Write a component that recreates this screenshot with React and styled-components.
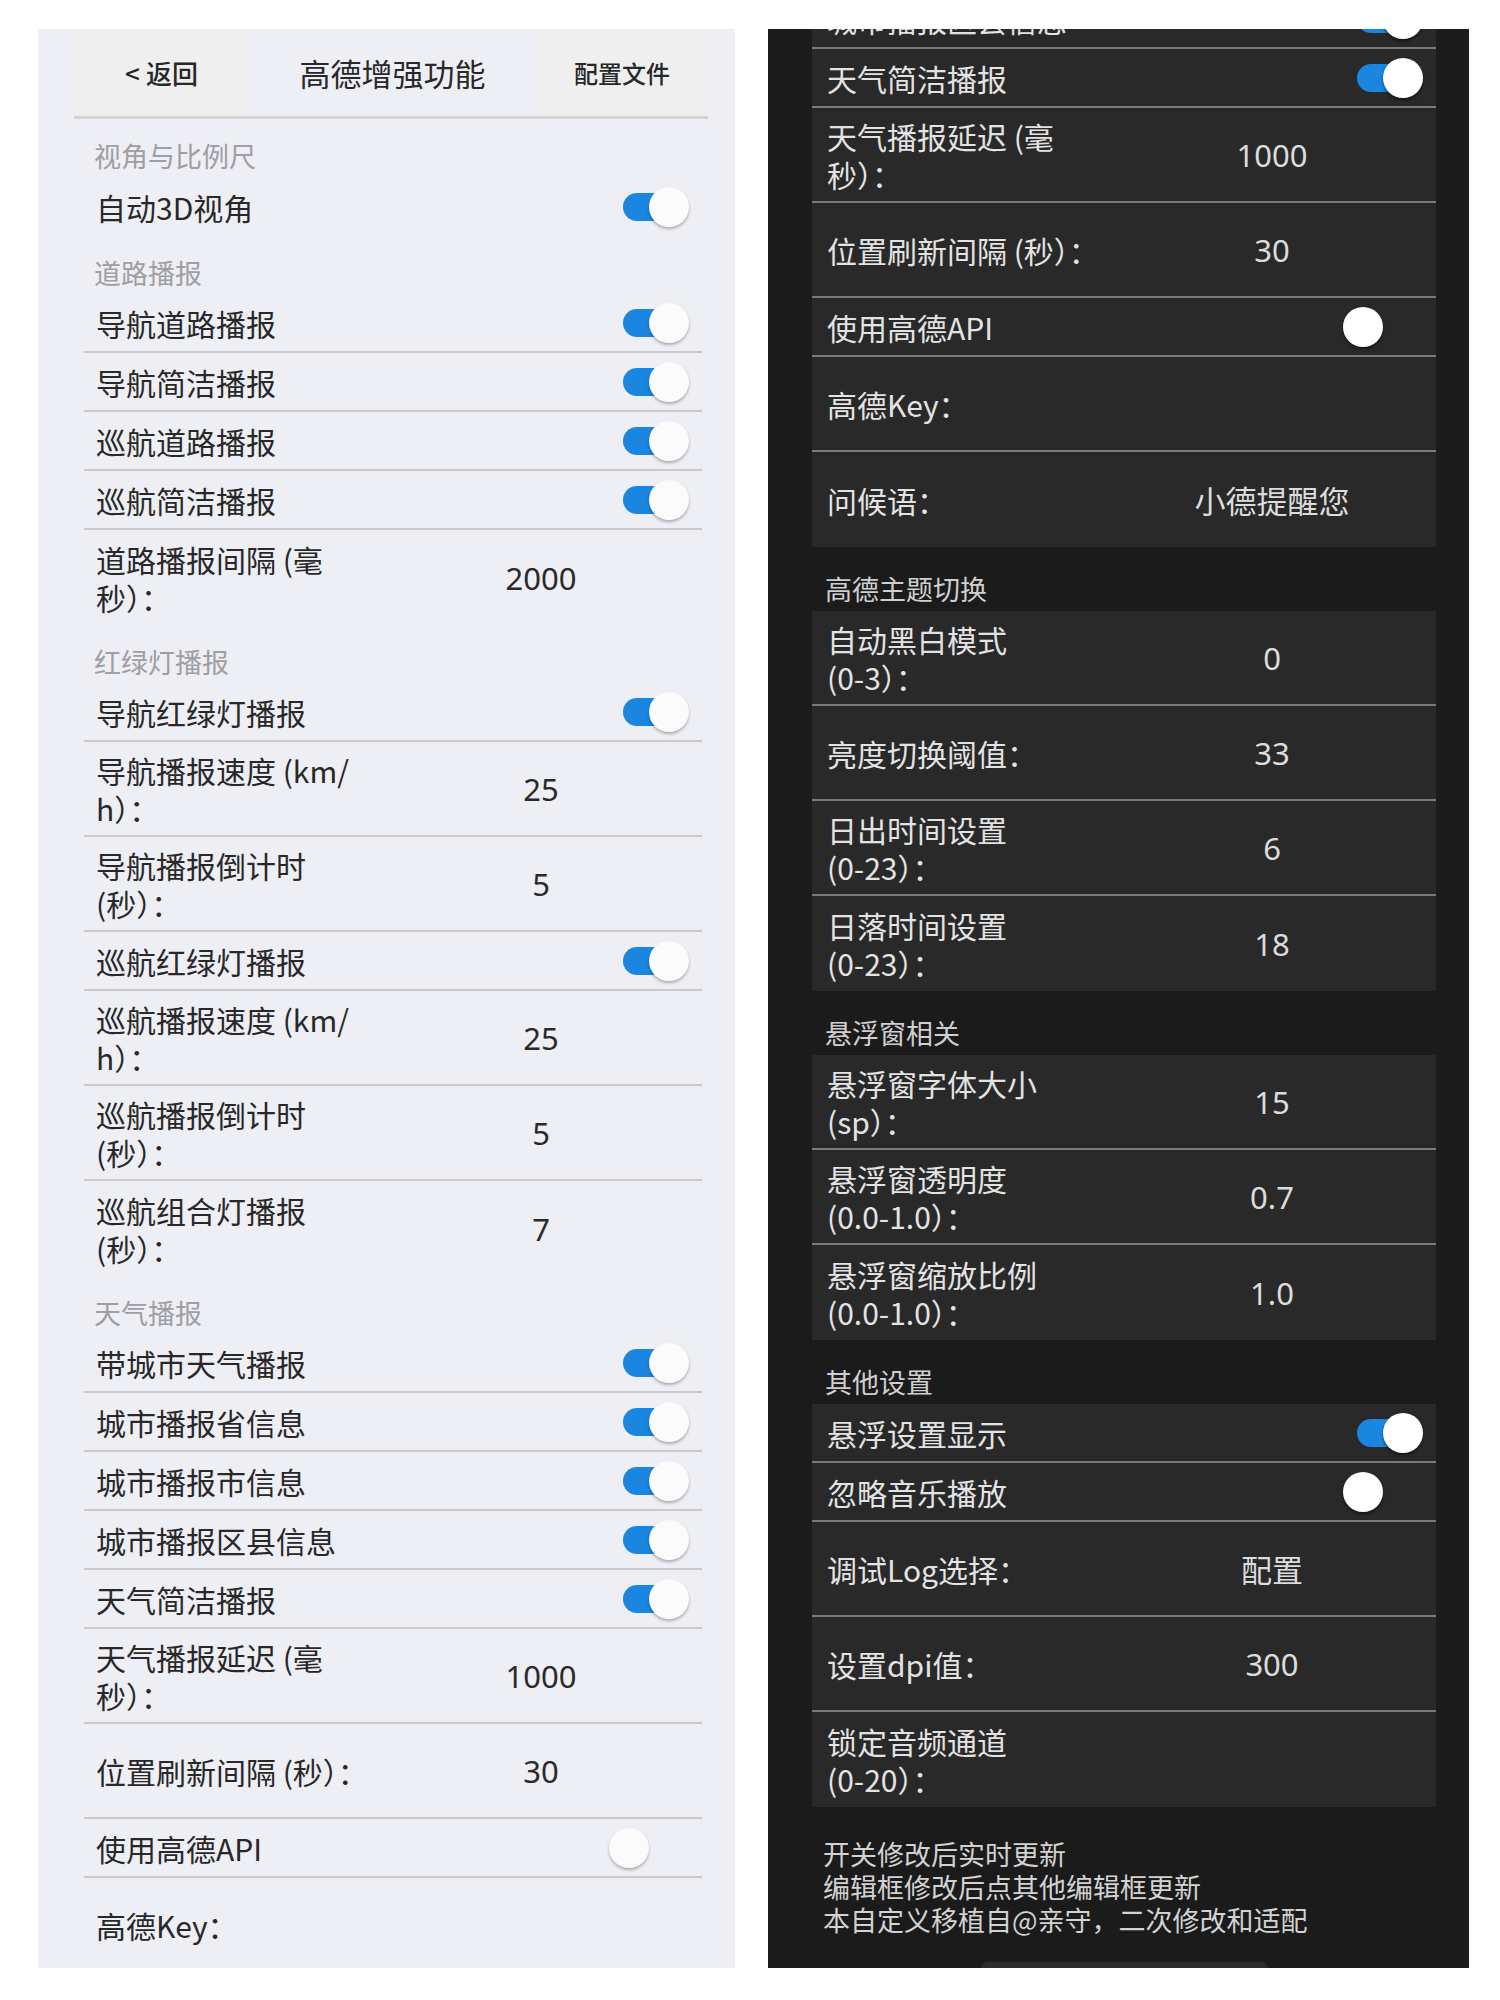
import React from 'react';
import styled, { createGlobalStyle, ThemeProvider } from 'styled-components';

const lightTheme = {
  panelBg: '#eeeef5',
  groupBg: 'transparent',
  text: '#282828',
  value: '#2a2a2a',
  sectionText: '#9e9ea3',
  divider: '#cacace',
  knob: '#fbfbfb',
  knobShadow: '0 2px 3px rgba(0, 0, 0, 0.28)',
  headerButtonBg: '#efeff0',
  headerLine: '#d4d4d8',
  note: '#555555',
  sectionHeight: 58,
  sectionPad: 8,
  sectionIndent: 10,
  rowIndent: 12,
  listLeft: 46,
};

const darkTheme = {
  panelBg: '#1b1b1b',
  groupBg: '#292929',
  text: '#e3e3e3',
  value: '#dcdcdc',
  sectionText: '#cfcfcf',
  divider: '#7a7a7a',
  knob: '#ffffff',
  knobShadow: '0 2px 3px rgba(0, 0, 0, 0.5)',
  headerButtonBg: '#252525',
  headerLine: '#333333',
  note: '#d2d2d2',
  sectionHeight: 64,
  sectionPad: 9,
  sectionIndent: 13,
  rowIndent: 15,
  listLeft: 44,
};

// settings list, shared by both colour schemes
const sections = [
  {
    title: '视角与比例尺',
    rows: [{ label: '自动3D视角', on: true }],
  },
  {
    title: '道路播报',
    rows: [
      { label: '导航道路播报', on: true },
      { label: '导航简洁播报', on: true },
      { label: '巡航道路播报', on: true },
      { label: '巡航简洁播报', on: true },
      { label: '道路播报间隔 (毫\n秒）：', value: '2000' },
    ],
  },
  {
    title: '红绿灯播报',
    rows: [
      { label: '导航红绿灯播报', on: true },
      { label: '导航播报速度 (km/\nh）：', value: '25' },
      { label: '导航播报倒计时\n(秒）：', value: '5' },
      { label: '巡航红绿灯播报', on: true },
      { label: '巡航播报速度 (km/\nh）：', value: '25' },
      { label: '巡航播报倒计时\n(秒）：', value: '5' },
      { label: '巡航组合灯播报\n(秒）：', value: '7' },
    ],
  },
  {
    title: '天气播报',
    rows: [
      { label: '带城市天气播报', on: true },
      { label: '城市播报省信息', on: true },
      { label: '城市播报市信息', on: true },
      { label: '城市播报区县信息', on: true },
      { label: '天气简洁播报', on: true },
      { label: '天气播报延迟 (毫\n秒）：', value: '1000' },
      { label: '位置刷新间隔 (秒）：', value: '30' },
      { label: '使用高德API', on: false },
      { label: '高德Key：', value: '' },
      { label: '问候语：', value: '小德提醒您' },
    ],
  },
  {
    title: '高德主题切换',
    rows: [
      { label: '自动黑白模式\n(0-3）：', value: '0' },
      { label: '亮度切换阈值：', value: '33' },
      { label: '日出时间设置\n(0-23）：', value: '6' },
      { label: '日落时间设置\n(0-23）：', value: '18' },
    ],
  },
  {
    title: '悬浮窗相关',
    rows: [
      { label: '悬浮窗字体大小\n(sp）：', value: '15' },
      { label: '悬浮窗透明度\n(0.0-1.0）：', value: '0.7' },
      { label: '悬浮窗缩放比例\n(0.0-1.0）：', value: '1.0' },
    ],
  },
  {
    title: '其他设置',
    rows: [
      { label: '悬浮设置显示', on: true },
      { label: '忽略音乐播放', on: false },
      { label: '调试Log选择：', value: '配置' },
      { label: '设置dpi值：', value: '300' },
      { label: '锁定音频通道\n(0-20）：', value: '' },
    ],
  },
];

const notes = '开关修改后实时更新\n编辑框修改后点其他编辑框更新\n本自定义移植自@亲守，二次修改和适配';

const GlobalStyle = createGlobalStyle`
  body {
    margin: 0;
    background: #ffffff;
    font-family: "Noto Sans CJK SC", "Noto Sans", sans-serif;
  }
`;

const Page = styled.div`
  display: flex;
  gap: 33px;
  padding: 29px 0 0 38px;
`;

const Panel = styled.div`
  position: relative;
  width: ${p => p.$width}px;
  height: 1939px;
  overflow: hidden;
  background: ${p => p.theme.panelBg};
`;

const Scroller = styled.div`
  margin-top: ${p => -p.$offset}px;
`;

const Header = styled.div`
  display: grid;
  grid-template-columns: 175px 1fr 172px;
  height: 90px;
  margin: 0 27px 0 36px;
  box-sizing: border-box;
  border-bottom: 3px solid ${p => p.theme.headerLine};
`;

const HeaderButton = styled.div`
  display: flex;
  align-items: center;
  justify-content: center;
  gap: 6px;
  background: ${p => p.theme.headerButtonBg};
  color: ${p => p.theme.text};
  font-size: ${p => p.$size}px;
  font-weight: 500;
`;

const HeaderTitle = styled.div`
  display: flex;
  align-items: center;
  justify-content: center;
  color: ${p => p.theme.text};
  font-size: 31px;
`;

const List = styled.div`
  margin: 0 33px 0 ${p => p.theme.listLeft}px;
`;

const SectionTitle = styled.div`
  display: flex;
  align-items: flex-end;
  height: ${p => p.theme.sectionHeight}px;
  box-sizing: border-box;
  padding: 0 0 ${p => p.theme.sectionPad}px ${p => p.theme.sectionIndent}px;
  font-size: 27px;
  line-height: 26px;
  color: ${p => p.theme.sectionText};
`;

const Group = styled.div`
  background: ${p => p.theme.groupBg};
`;

const Row = styled.div`
  display: flex;
  align-items: center;
  justify-content: ${p => (p.$tall ? 'flex-start' : 'space-between')};
  height: ${p => (p.$tall ? 95 : 59)}px;
  box-sizing: border-box;
  padding: 0 13px 0 ${p => p.theme.rowIndent}px;
  border-bottom: 2px solid ${p => p.theme.divider};

  &:last-child {
    border-bottom: none;
  }
`;

const Label = styled.div`
  flex-shrink: 0;
  width: ${p => (p.$tall ? '300px' : 'auto')};
  white-space: pre;
  font-size: 30px;
  line-height: 38px;
  color: ${p => p.theme.text};
`;

const Value = styled.div`
  width: 290px;
  text-align: center;
  font-family: "Noto Sans", "Noto Sans CJK SC", sans-serif;
  font-size: 31px;
  color: ${p => p.theme.value};
`;

const Switch = styled.span`
  position: relative;
  flex-shrink: 0;
  width: 80px;
  height: 40px;
`;

const Track = styled.span`
  position: absolute;
  left: 14px;
  top: 6px;
  width: 54px;
  height: 28px;
  border-radius: 14px;
  background: ${p => (p.$on ? '#1a86e0' : 'transparent')};
`;

const Knob = styled.span`
  position: absolute;
  top: 0;
  left: ${p => (p.$on ? 40 : 0)}px;
  width: 40px;
  height: 40px;
  border-radius: 50%;
  background: ${p => p.theme.knob};
  box-shadow: ${p => p.theme.knobShadow};
`;

const Notes = styled.div`
  padding: 30px 0 40px 11px;
  white-space: pre-line;
  font-size: 27px;
  line-height: 33px;
  color: ${p => p.theme.note};
`;

const HomeBar = styled.div`
  position: absolute;
  left: 213px;
  bottom: -8px;
  width: 287px;
  height: 14px;
  border-radius: 7px;
  background: #2c2c2c;
`;

const SettingRow = ({ row }) => {
  const tall = row.on === undefined;
  return (
    <Row $tall={tall}>
      <Label $tall={tall}>{row.label}</Label>
      {tall ? (
        <Value>{row.value}</Value>
      ) : (
        <Switch>
          <Track $on={row.on} />
          <Knob $on={row.on} />
        </Switch>
      )}
    </Row>
  );
};

const SettingsScreen = ({ offset = 0 }) => (
  <Scroller $offset={offset}>
    <Header>
      <HeaderButton $size={26}>
        <span>&lt;</span>
        <span>返回</span>
      </HeaderButton>
      <HeaderTitle>高德增强功能</HeaderTitle>
      <HeaderButton $size={24}>配置文件</HeaderButton>
    </Header>
    <List>
      {sections.map(section => (
        <React.Fragment key={section.title}>
          <SectionTitle>{section.title}</SectionTitle>
          <Group>
            {section.rows.map(row => (
              <SettingRow key={row.label} row={row} />
            ))}
          </Group>
        </React.Fragment>
      ))}
      <Notes>{notes}</Notes>
    </List>
  </Scroller>
);

const App = () => (
  <>
    <GlobalStyle />
    <Page>
      <ThemeProvider theme={lightTheme}>
        <Panel $width={697}>
          <SettingsScreen />
        </Panel>
      </ThemeProvider>
      <ThemeProvider theme={darkTheme}>
        <Panel $width={701}>
          <SettingsScreen offset={1545} />
          <HomeBar />
        </Panel>
      </ThemeProvider>
    </Page>
  </>
);

export default App;
